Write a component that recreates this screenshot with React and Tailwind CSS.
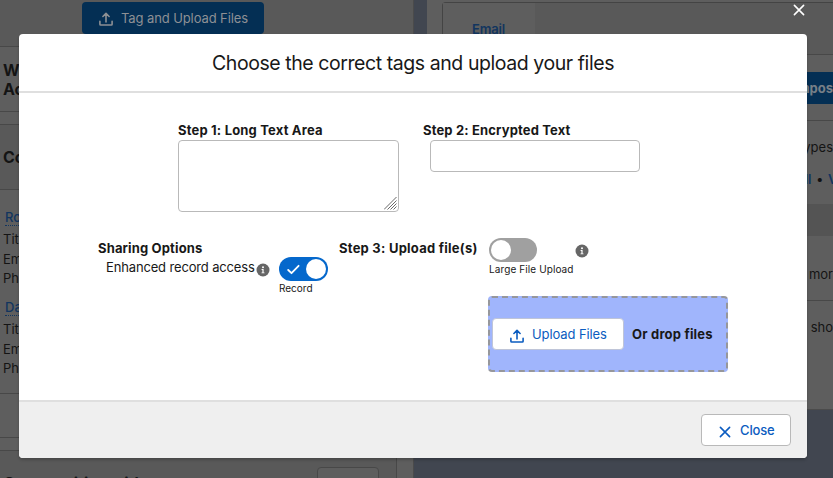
function UploadIcon({ className }) {
  return (
    <svg className={className} width="14" height="14" viewBox="0 0 14 14" fill="none" stroke="currentColor" strokeWidth="1.6" strokeLinecap="round" strokeLinejoin="round">
      <path d="M0.9 9.3v2.9c0 .5.3.8.8.8h10.6c.5 0 .8-.3.8-.8V9.3" />
      <path d="M7 10V1.6M3.9 4.5L7 1.4l3.1 3.1" />
    </svg>
  );
}

function CrossIcon({ className, width = 1.6 }) {
  return (
    <svg className={className} width="12" height="12" viewBox="0 0 12 12" fill="none" stroke="currentColor" strokeWidth={width} strokeLinecap="round">
      <path d="M1.4 1.4l9.2 9.2M10.6 1.4l-9.2 9.2" />
    </svg>
  );
}

function InfoIcon({ className }) {
  return (
    <svg className={className} width="14" height="14" viewBox="0 0 14 14">
      <circle cx="7" cy="7" r="6.5" fill="#666" />
      <circle cx="7" cy="4.3" r="1" fill="#fff" />
      <path d="M5.6 6.1h2v3.3h.9v.9h-3v-.9h.9V7h-.8z" fill="#fff" />
    </svg>
  );
}

function Contact({ name }) {
  return (
    <div className="h-[90px] text-[13px] leading-[19.5px]">
      <div className="ml-[2px] h-[18px] w-20 border-b border-dotted border-[#12355f] font-medium leading-[19px] text-[#12355f]">{name}</div>
      <div className="mt-[4px]">Title:</div>
      <div>Email:</div>
      <div>Phone:</div>
    </div>
  );
}

function LeftColumn() {
  return (
    <div className="w-[414px] shrink-0 border-r border-[#4b4b4b] bg-[#5e5e5e]">
      <div className="flex h-[47px] items-start border-b border-[#484848] bg-[#595959] pl-[82px] pt-[2px]">
        <div className="flex h-8 w-[182px] items-center rounded bg-[#042f54] pl-[17px] text-[13px] text-[#8d9094]">
          <UploadIcon className="mt-[2px]" />
          <span className="ml-2 mt-[2px] whitespace-nowrap tracking-[-0.1px]">Tag and Upload Files</span>
        </div>
      </div>
      <div className="h-[65px] border-b border-[#484848] pl-[3px] pt-[13px] text-[16px] font-bold leading-[20px]">
        <div>Web</div>
        <div className="-mt-px">Account</div>
      </div>
      <div className="mt-3 h-[66px] border-y border-[#484848] bg-[#595959] pl-[3px] pt-[22px] text-[16px] font-bold leading-[20px]">Contacts</div>
      <div className="h-[204px] border-b border-[#484848] pl-[3px] pt-[18px]">
        <Contact name="Rose" />
        <Contact name="David" />
      </div>
      <div className="h-[44px] border-b border-[#484848]" />
      <div className="mr-[16px] mt-3 flex h-[66px] justify-between border-r border-t border-[#484848] bg-[#595959] pl-[3px] pr-[17px] pt-[16px]">
        <span className="pt-[6px] text-[16px] font-bold leading-[20px]">Communities with</span>
        <div className="h-8 w-[62px] rounded border border-[#484848] bg-[#5e5e5e]" />
      </div>
    </div>
  );
}

function RightColumn() {
  return (
    <div className="ml-[13px] h-[410px] flex-1 border-b border-[#4b4b4b] bg-[#5e5e5e] text-[13px] leading-[16px]">
      <div className="ml-[15px] mt-[2px] flex h-[53px] rounded-tl border-l border-t border-[#444] bg-[#595959]">
        <div className="w-[92px] bg-[#5e5e5e] pl-[29px] pt-[18px] text-[#12355f]"><span className="font-semibold tracking-[-0.15px]">Email</span></div>
        <div className="flex-1 border-b border-[#484848]" />
      </div>
      <div className="flex h-[66px] justify-end border-b border-[#484848] pt-[17px]">
        <div className="flex h-8 w-[68px] items-center justify-end overflow-hidden bg-[#042f54] font-bold text-[#777f87]">
          <span className="whitespace-nowrap">Compos</span>
        </div>
      </div>
      <div className="h-[83px] overflow-hidden pt-[18px] text-right">
        <div className="whitespace-nowrap">All types</div>
        <div className="mt-4 flex justify-end gap-[5px] whitespace-nowrap font-semibold text-[#12355f]"><span>Expand All</span><span className="text-[#111]">•</span><span className="w-[5px]">View</span></div>
      </div>
      <div className="h-8 bg-[#545454]" />
      <div className="h-[65px] overflow-hidden whitespace-nowrap border-b border-[#484848] pt-[30px] text-right">to load mor</div>
      <div className="pt-[18px] text-right">to sho</div>
    </div>
  );
}

function Modal() {
  return (
    <section className="flex h-[424px] w-[788px] flex-col overflow-hidden rounded-[4px] bg-white text-[#181818] shadow-[0_2px_3px_rgba(0,0,0,0.2)]">
      <header className="h-[59px] whitespace-nowrap border-b-2 border-[#dfdfdf] pt-[14px] text-center text-[19.5px] leading-[30px] tracking-[-0.43px]">
        Choose the correct tags and upload your files
      </header>
      <main className="flex-1 text-[13px]">
        <div className="flex h-[145px] pl-[159px] pt-[29px]">
          <div className="w-[245px]">
            <div className="h-[18px] whitespace-nowrap font-bold leading-[16px] tracking-[0.18px]">Step 1: Long Text Area</div>
            <div className="flex h-[72px] w-[221px] items-end justify-end rounded-[4px] border border-[#b9b9b9] p-px">
              <svg width="13" height="13" viewBox="0 0 13 13" stroke="#686868" strokeWidth="1">
                <path d="M0 12.5L12.5 0M3.5 12.5L12.5 3.5M6.5 12.5l6-6M9.5 12.5l3-3" />
              </svg>
            </div>
          </div>
          <div>
            <div className="h-[18px] whitespace-nowrap font-bold leading-[16px] tracking-[0.15px]">Step 2: Encrypted Text</div>
            <div className="ml-[7px] h-8 w-[210px] rounded-[4px] border border-[#b9b9b9]" />
          </div>
        </div>
        <div className="flex pl-[79px]">
          <div className="w-[241px]">
            <div className="h-5 whitespace-nowrap font-bold leading-[20px] tracking-[0.14px]">Sharing Options</div>
            <div className="flex pl-2">
              <span className="w-[150px] whitespace-nowrap leading-[19px] tracking-[-0.15px]">Enhanced record access</span>
              <InfoIcon className="mt-[5px] shrink-0" />
              <div className="ml-[9px] -mt-[1px]">
                <div className="flex h-6 w-[49px] items-center justify-between rounded-full bg-[#0568cc] pl-2 pr-[2px] text-white">
                  <svg width="13" height="11" viewBox="0 0 13 11" fill="none" stroke="currentColor" strokeWidth="1.8" strokeLinecap="round" strokeLinejoin="round">
                    <path d="M1.2 6l3.3 3.2L11.6 1.8" />
                  </svg>
                  <div className="h-5 w-5 rounded-full bg-white" />
                </div>
                <div className="text-[10px] leading-[14px]">Record</div>
              </div>
            </div>
          </div>
          <div className="w-[150px] whitespace-nowrap font-bold leading-[20px] tracking-[0.24px]">Step 3: Upload file(s)</div>
          <div>
            <div className="flex h-[58px]">
              <div className="w-[86px]">
                <div className="flex h-6 w-12 items-center rounded-full bg-[#a0a0a0] pl-[2px]">
                  <div className="h-5 w-5 rounded-full bg-white" />
                </div>
                <div className="whitespace-nowrap text-[10px] leading-[15px] tracking-[0.1px]">Large File Upload</div>
              </div>
              <InfoIcon className="mt-[6px]" />
            </div>
            <div className="-ml-px flex h-[76px] w-[240px] items-center rounded-[4px] border-2 border-dashed border-[#96979b] bg-[#a0b5fc] pl-[2px]">
              <div className="flex h-8 w-[132px] shrink-0 items-center rounded-[4px] border border-[#bfc5d8] bg-white pl-[17px] text-[#0b5cc0]">
                <UploadIcon className="mt-[4px]" />
                <span className="ml-2 mt-[2px] whitespace-nowrap tracking-[-0.1px]">Upload Files</span>
              </div>
              <span className="ml-2 mt-[2px] whitespace-nowrap font-bold tracking-[0.2px]">Or drop files</span>
            </div>
          </div>
        </div>
      </main>
      <footer className="flex h-[58px] justify-end border-t-2 border-[#dfdfdf] bg-[#efefef] pr-4 pt-3">
        <div className="flex h-8 w-[90px] items-center rounded-[4px] border border-[#b9b9b9] bg-white pl-[17px] text-[13px] font-medium text-[#0b5cc0]">
          <CrossIcon className="mt-[4px]" />
          <span className="ml-[9px] mt-[2px] tracking-[-0.15px]">Close</span>
        </div>
      </footer>
    </section>
  );
}

export default function App() {
  return (
    <div className="relative h-[478px] w-[833px] overflow-hidden bg-[#414650] font-['Inter','Liberation_Sans',sans-serif] text-[13px] text-[#141414]">
      <div className="flex h-[478px] items-start overflow-hidden">
        <LeftColumn />
        <RightColumn />
      </div>
      <div className="absolute left-[19px] top-[34px]">
        <Modal />
      </div>
      <CrossIcon className="absolute left-[793px] top-[4px] text-white" />
    </div>
  );
}
